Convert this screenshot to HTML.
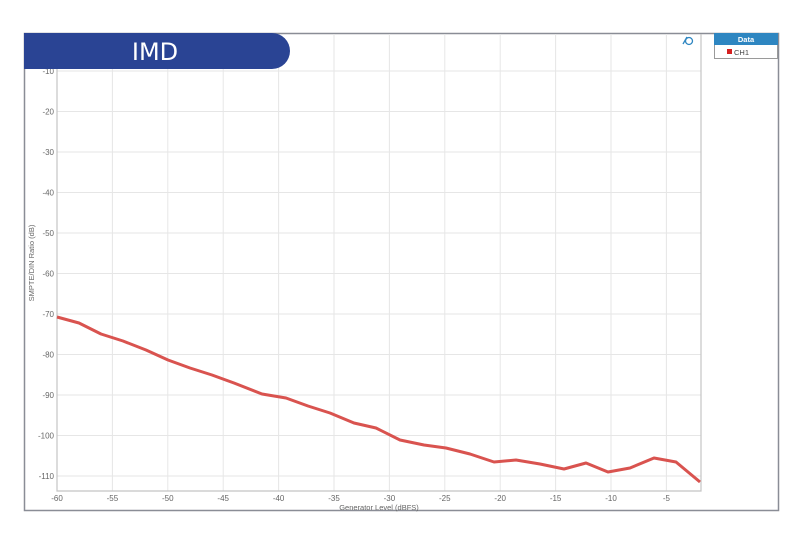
<!DOCTYPE html>
<html><head><style>
html,body{margin:0;padding:0;background:#fff;width:800px;height:556px;overflow:hidden}
svg{display:block;font-family:"Liberation Sans",sans-serif}
</style></head><body>
<svg width="800" height="556" viewBox="0 0 800 556">
<rect x="24.5" y="33.5" width="754" height="477" fill="#fff" stroke="#8a8d96" stroke-width="1.5"/>
<g stroke="#e6e6e6" stroke-width="1">
<line x1="57" y1="71" x2="701" y2="71"/><line x1="57" y1="111.5" x2="701" y2="111.5"/><line x1="57" y1="152" x2="701" y2="152"/><line x1="57" y1="192.5" x2="701" y2="192.5"/><line x1="57" y1="233" x2="701" y2="233"/><line x1="57" y1="273.5" x2="701" y2="273.5"/><line x1="57" y1="314" x2="701" y2="314"/><line x1="57" y1="354.5" x2="701" y2="354.5"/><line x1="57" y1="395" x2="701" y2="395"/><line x1="57" y1="435.5" x2="701" y2="435.5"/><line x1="57" y1="476" x2="701" y2="476"/>
<line x1="112.4" y1="34" x2="112.4" y2="491"/><line x1="167.8" y1="34" x2="167.8" y2="491"/><line x1="223.2" y1="34" x2="223.2" y2="491"/><line x1="278.6" y1="34" x2="278.6" y2="491"/><line x1="334" y1="34" x2="334" y2="491"/><line x1="389.4" y1="34" x2="389.4" y2="491"/><line x1="444.8" y1="34" x2="444.8" y2="491"/><line x1="500.2" y1="34" x2="500.2" y2="491"/><line x1="555.6" y1="34" x2="555.6" y2="491"/><line x1="611" y1="34" x2="611" y2="491"/><line x1="666.4" y1="34" x2="666.4" y2="491"/>
</g>
<path d="M57 34V491H701V34" fill="none" stroke="#c4c4c4" stroke-width="1.2"/>
<g font-size="8" fill="#666" text-anchor="end">
<text x="54" y="74">-10</text><text x="54" y="114.5">-20</text><text x="54" y="155">-30</text><text x="54" y="195.5">-40</text><text x="54" y="236">-50</text><text x="54" y="276.5">-60</text><text x="54" y="317">-70</text><text x="54" y="357.5">-80</text><text x="54" y="398">-90</text><text x="54" y="438.5">-100</text><text x="54" y="479">-110</text>
</g>
<g font-size="8" fill="#666" text-anchor="middle">
<text x="57" y="501">-60</text><text x="112.4" y="501">-55</text><text x="167.8" y="501">-50</text><text x="223.2" y="501">-45</text><text x="278.6" y="501">-40</text><text x="334" y="501">-35</text><text x="389.4" y="501">-30</text><text x="444.8" y="501">-25</text><text x="500.2" y="501">-20</text><text x="555.6" y="501">-15</text><text x="611" y="501">-10</text><text x="666.4" y="501">-5</text>
<text x="379" y="510" font-size="7.5">Generator Level (dBFS)</text>
<text transform="translate(34 263) rotate(-90)" font-size="7.5">SMPTE/DIN Ratio (dB)</text>
</g>
<polyline fill="none" stroke="#d9534f" stroke-width="3" stroke-linejoin="round" points="57,317 79,323 101,334 123,341 146,350 168,360 190,368 212,375 234,383 262,394 286,398 308,406 330,413 354,423 376,428 400,440 424,445 446,448 470,454 494,462 516,460 540,464 564,469 586,463 608,472 630,468 654,458 676,462 700,482"/>
<path d="M24 33H272A18 18 0 0 1 272 69H24Z" fill="#2a4494"/>
<text x="155" y="60" font-size="24" fill="#fff" text-anchor="middle" font-family="'DejaVu Sans',sans-serif">IMD</text>
<rect x="714.5" y="33.5" width="63" height="25" fill="#fff" stroke="#9a9a9a"/>
<rect x="714" y="33" width="64" height="12" fill="#2e86c1"/>
<text x="746" y="42" font-size="7.5" fill="#fff" text-anchor="middle" font-weight="bold">Data</text>
<rect x="727" y="49" width="5" height="5" fill="#d62020"/>
<text x="734" y="55" font-size="7.5" fill="#444">CH1</text>
<g fill="none" stroke="#2e86c1" stroke-width="1.3"><circle cx="689" cy="41" r="3.5"/><path d="M683 44L687 37"/></g>
</svg>
</body></html>
